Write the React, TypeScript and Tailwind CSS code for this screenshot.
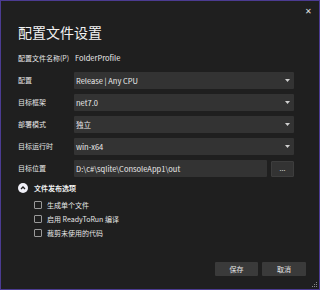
import { useState } from "react";

const font = { fontFamily: '"Noto Sans CJK SC", "Noto Sans", sans-serif' };

function Caret() {
  return (
    <svg width="5" height="3" viewBox="0 0 5 3" className="shrink-0">
      <path d="M0 0h5L2.5 3z" fill="#d0d0d0" />
    </svg>
  );
}

function SelectRow({ label, value }: { label: string; value: string }) {
  return (
    <div className="flex items-center h-[17px]">
      <div className="w-[56px] shrink-0 text-[7px] text-[#e6e6e6]">{label}</div>
      <div className="flex-1 h-full bg-[#333333] rounded-[1px] flex items-center justify-between pl-[2px] pr-[4px]">
        <span className="text-[7.5px] text-[#ececec]">{value}</span>
        <Caret />
      </div>
    </div>
  );
}

function Check({ label }: { label: string }) {
  const [on, setOn] = useState(false);
  return (
    <label className="flex items-center h-[14px] gap-[5px] cursor-pointer" onClick={() => setOn(!on)}>
      <span className="w-[8px] h-[8px] border border-[#9a9a9a] rounded-[1px] flex items-center justify-center text-[6px] text-white">
        {on ? "✓" : ""}
      </span>
      <span className="text-[7px] text-[#e6e6e6]">{label}</span>
    </label>
  );
}

export default function App() {
  const [open, setOpen] = useState(true);

  return (
    <div
      className="relative w-[320px] h-[290px] bg-[#1f1f1f] border border-[#4b3b91] flex flex-col pl-[17px]"
      style={font}
    >
      <div className="absolute top-[6px] right-[7px] text-[8px] leading-none text-[#e0e0e0]">✕</div>

      <div className="mt-[23px] h-[16px] flex items-center text-[14px] text-[#f2f2f2]">配置文件设置</div>

      <div className="mt-[11px] h-[14px] flex items-center pr-[25px]">
        <div className="w-[56px] shrink-0 text-[7px] text-[#e6e6e6]">配置文件名称(P)</div>
        <span className="text-[7.5px] text-[#ececec] pl-[1px]">FolderProfile</span>
      </div>

      <div className="mt-[7px] flex flex-col gap-[5px] pr-[25px]">
        <SelectRow label="配置" value="Release | Any CPU" />
        <SelectRow label="目标框架" value="net7.0" />
        <SelectRow label="部署模式" value="独立" />
        <SelectRow label="目标运行时" value="win-x64" />
        <div className="flex items-center h-[17px]">
          <div className="w-[56px] shrink-0 text-[7px] text-[#e6e6e6]">目标位置</div>
          <div className="flex-1 h-full bg-[#333333] rounded-[1px] flex items-center pl-[2px]">
            <span className="text-[7.5px] text-[#ececec]">D:\c#\sqlite\ConsoleApp1\out</span>
          </div>
          <div className="ml-[4px] w-[23px] h-[16px] bg-[#333333] border border-[#3d3d3d] rounded-[1px] flex items-center justify-center text-[7px] text-[#e0e0e0] leading-none">
            ...
          </div>
        </div>
      </div>

      <div className="mt-[5px] h-[12px] flex items-center gap-[6px] cursor-pointer" onClick={() => setOpen(!open)}>
        <span className="w-[10px] h-[10px] rounded-full bg-[#f0f0f8] flex items-center justify-center">
          <svg width="6" height="4" viewBox="0 0 6 4">
            <path d={open ? "M1 3L3 1L5 3" : "M1 1L3 3L5 1"} stroke="#1f1f1f" strokeWidth="1.3" fill="none" />
          </svg>
        </span>
        <span className="text-[7px] font-bold text-[#f0f0f0]">文件发布选项</span>
      </div>

      {open && (
        <div className="mt-[4px] pl-[16px] flex flex-col">
          <Check label="生成单个文件" />
          <Check label="启用 ReadyToRun 编译" />
          <Check label="裁剪未使用的代码" />
        </div>
      )}

      <div className="mt-auto mb-[13px] flex justify-end gap-[4px] pr-[13px]">
        <button className="w-[43px] h-[14px] bg-[#3a3a3a] rounded-[1px] text-[7px] text-[#e6e6e6] flex items-center justify-center">
          保存
        </button>
        <button className="w-[44px] h-[14px] bg-[#3a3a3a] rounded-[1px] text-[7px] text-[#e6e6e6] flex items-center justify-center">
          取消
        </button>
      </div>

      <svg className="absolute right-[1px] bottom-[1px]" width="6" height="6" viewBox="0 0 6 6">
        <rect x="4" y="0" width="1" height="1" fill="#8a8a8a" />
        <rect x="2" y="2" width="1" height="1" fill="#8a8a8a" />
        <rect x="4" y="2" width="1" height="1" fill="#8a8a8a" />
        <rect x="0" y="4" width="1" height="1" fill="#8a8a8a" />
        <rect x="2" y="4" width="1" height="1" fill="#8a8a8a" />
        <rect x="4" y="4" width="1" height="1" fill="#8a8a8a" />
      </svg>
    </div>
  );
}
